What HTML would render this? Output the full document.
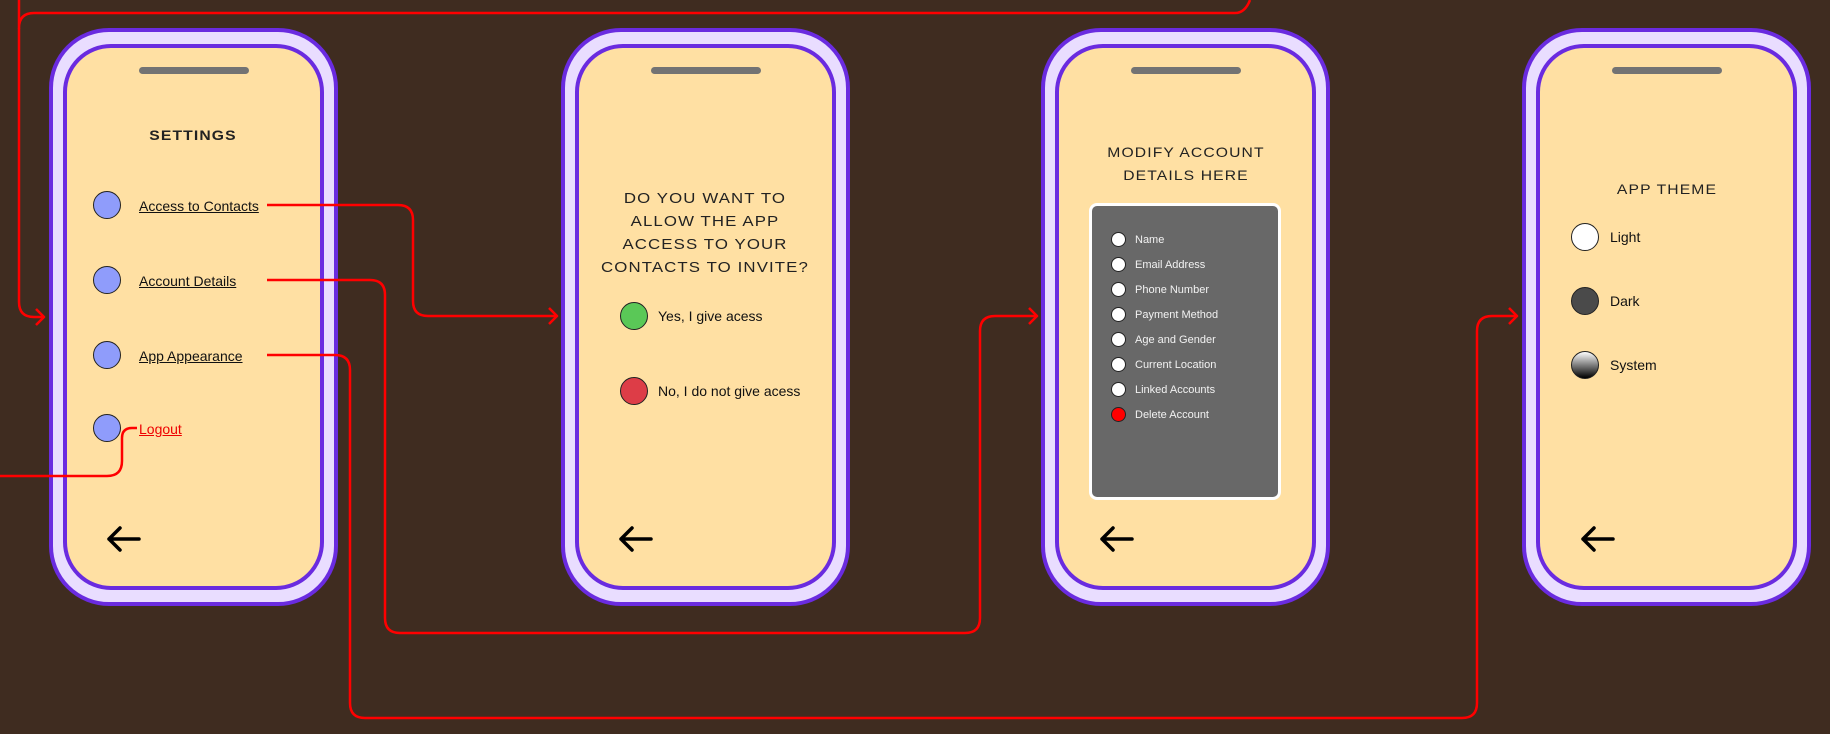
<!DOCTYPE html>
<html><head><meta charset="utf-8"><style>
*{margin:0;padding:0;box-sizing:border-box}
body{width:1830px;height:734px;background:#3f2c20;position:relative;overflow:hidden;font-family:"Liberation Sans",sans-serif}
.ph{position:absolute;top:28px;width:289px;height:578px;background:#e9ddff;border:4px solid #6a2be0;border-radius:60px}
.in{position:absolute;left:10px;top:12px;right:10px;bottom:12px;background:#ffe0a3;border:4px solid #6a2be0;border-radius:48px}
.sp{position:absolute;top:67px;width:110px;height:7px;border-radius:4px;background:#737373}
.t{position:absolute;color:#222;text-align:center;text-transform:uppercase;letter-spacing:1px;font-size:15px;line-height:20px;transform:scaleX(1.12);transform-origin:center;white-space:nowrap}
.c{position:absolute;border:1.5px solid #222;border-radius:50%}
.l{position:absolute;font-size:14px;color:#111;line-height:18px;font-family:"Liberation Sans Narrow","Liberation Sans",sans-serif}
.u{text-decoration:underline}
.box{position:absolute;left:1089px;top:203px;width:192px;height:297px;background:#686868;border:3px solid #fff;border-radius:8px}
.d{position:absolute;width:15px;height:15px;border-radius:50%;background:#fff;border:1px solid #222}
.dl{position:absolute;color:#f2f2f2;font-size:11px;line-height:14px;font-family:"Liberation Sans Narrow","Liberation Sans",sans-serif}
svg.w{position:absolute;left:0;top:0}
</style></head><body>
<div class="ph" style="left:49px"><div class="in"></div></div>
<div class="ph" style="left:561px"><div class="in"></div></div>
<div class="ph" style="left:1041px"><div class="in"></div></div>
<div class="ph" style="left:1522px"><div class="in"></div></div>
<div class="sp" style="left:139px"></div>
<div class="sp" style="left:651px"></div>
<div class="sp" style="left:1131px"></div>
<div class="sp" style="left:1612px"></div>

<div class="t" style="left:113px;width:160px;top:125px;font-weight:bold;font-size:14px">Settings</div>
<div class="c" style="left:93px;top:191px;width:28px;height:28px;background:#8f9cfb"></div>
<div class="c" style="left:93px;top:266px;width:28px;height:28px;background:#8f9cfb"></div>
<div class="c" style="left:93px;top:341px;width:28px;height:28px;background:#8f9cfb"></div>
<div class="c" style="left:93px;top:414px;width:28px;height:28px;background:#8f9cfb"></div>
<div class="l u" style="left:139px;top:197px">Access to Contacts</div>
<div class="l u" style="left:139px;top:272px">Account Details</div>
<div class="l u" style="left:139px;top:347px">App Appearance</div>
<div class="l u" style="left:139px;top:420px;color:#e00">Logout</div>

<div class="t" style="left:580px;width:250px;top:187px;line-height:23px;font-size:15px">Do you want to<br>allow the app<br>access to your<br>contacts to invite?</div>
<div class="c" style="left:620px;top:302px;width:28px;height:28px;background:#5ac857"></div>
<div class="c" style="left:620px;top:377px;width:28px;height:28px;background:#dd3d47"></div>
<div class="l" style="left:658px;top:307px">Yes, I give acess</div>
<div class="l" style="left:658px;top:382px">No, I do not give acess</div>

<div class="t" style="left:1096px;width:180px;top:141px;line-height:23px;font-size:14px">Modify account<br>details here</div>
<div class="box"></div>
<div class="d" style="left:1111px;top:232px"></div><div class="dl" style="left:1135px;top:233px">Name</div>
<div class="d" style="left:1111px;top:257px"></div><div class="dl" style="left:1135px;top:258px">Email Address</div>
<div class="d" style="left:1111px;top:282px"></div><div class="dl" style="left:1135px;top:283px">Phone Number</div>
<div class="d" style="left:1111px;top:307px"></div><div class="dl" style="left:1135px;top:308px">Payment Method</div>
<div class="d" style="left:1111px;top:332px"></div><div class="dl" style="left:1135px;top:333px">Age and Gender</div>
<div class="d" style="left:1111px;top:357px"></div><div class="dl" style="left:1135px;top:358px">Current Location</div>
<div class="d" style="left:1111px;top:382px"></div><div class="dl" style="left:1135px;top:383px">Linked Accounts</div>
<div class="d" style="left:1111px;top:407px;background:#f00"></div><div class="dl" style="left:1135px;top:408px">Delete Account</div>

<div class="t" style="left:1597px;width:140px;top:179px;font-size:14px">App Theme</div>
<div class="c" style="left:1571px;top:223px;width:28px;height:28px;background:#fff"></div>
<div class="c" style="left:1571px;top:287px;width:28px;height:28px;background:#4a4a4a"></div>
<div class="c" style="left:1571px;top:351px;width:28px;height:28px;background:linear-gradient(#fff,#000)"></div>
<div class="l" style="left:1610px;top:228px">Light</div>
<div class="l" style="left:1610px;top:292px">Dark</div>
<div class="l" style="left:1610px;top:356px">System</div>

<svg class="w" width="1830" height="734" viewBox="0 0 1830 734" fill="none">
<g stroke="#000" stroke-width="3.5" stroke-linecap="round" stroke-linejoin="round">
<path d="M109 539H139M109 539L120 528M109 539L120 550"/>
<path d="M621 539H651M621 539L632 528M621 539L632 550"/>
<path d="M1102 539H1132M1102 539L1113 528M1102 539L1113 550"/>
<path d="M1583 539H1613M1583 539L1594 528M1583 539L1594 550"/>
</g>
<g stroke="#f00" stroke-width="2.5" stroke-linejoin="round">
<path d="M19 0V28Q19 13 34 13H1235Q1245 13 1250 0"/>
<path d="M19 28V302Q19 317 34 317H44M36 309L44 317L36 325"/>
<path d="M267 205H398Q413 205 413 220V301Q413 316 428 316H557M549 308L557 316L549 324"/>
<path d="M267 280H370Q385 280 385 295V618Q385 633 400 633H965Q980 633 980 618V331Q980 316 995 316H1037M1029 308L1037 316L1029 324"/>
<path d="M267 355H335Q350 355 350 370V703Q350 718 365 718H1462Q1477 718 1477 703V331Q1477 316 1492 316H1517M1509 308L1517 316L1509 324"/>
<path d="M0 476H107Q122 476 122 461V438Q122 428 132 428H137"/>
</g>
</svg>
</body></html>
